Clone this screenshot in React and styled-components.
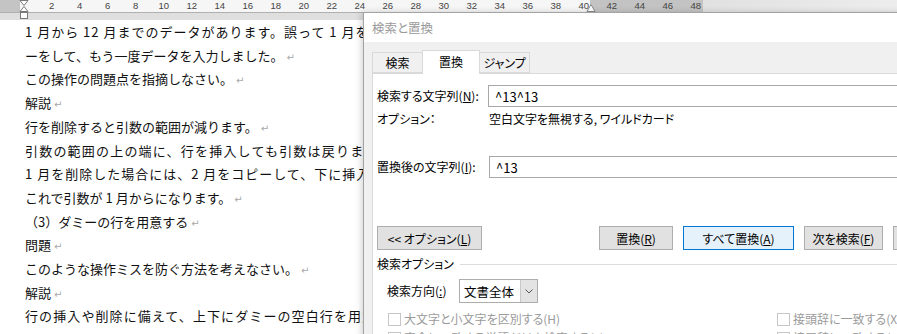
import React from "react";
import styled, { createGlobalStyle } from "styled-components";

const Global = createGlobalStyle`
  html, body { margin: 0; padding: 0; background: #fff; }
  body { width: 897px; height: 334px; overflow: hidden; }
`;

const Screen = styled.div`
  position: relative;
  width: 897px;
  height: 334px;
  overflow: hidden;
  background: #fff;
  font-family: "Noto Sans CJK JP", sans-serif;
`;

/* ---------- Ruler ---------- */
const Ruler = styled.div`
  position: relative;
  height: 20px;
  display: flex;
  flex-direction: column;
`;
const RulerTrack = styled.div`
  height: 12px;
  border-bottom: 1px solid #b0b0b0;
  background: linear-gradient(
    to right,
    #c4c4c4 0 20px,
    #f6f6f6 20px 590px,
    #c3c3c3 590px 703px,
    #e1e1e1 703px,
    #ededed 897px
  );
  display: flex;
  padding-left: 37.7px;
`;
const RulerNum = styled.span`
  flex: none;
  width: 28px;
  text-align: center;
  font: 9.5px/12px "Liberation Sans", Arial, sans-serif;
  color: #444;
`;
const RulerFoot = styled.div`
  height: 7px;
  background: #dfdfdf;
`;
const IndentMarker = styled.svg`
  position: absolute;
  left: 19px;
  top: 0;
`;
const RightMarker = styled.svg`
  position: absolute;
  left: 586px;
  top: 4px;
`;

/* ---------- Document ---------- */
const Doc = styled.div`
  width: 338px;
  overflow: hidden;
  padding-left: 25px;
  font-size: 13px;
  line-height: 23.7px;
  color: #111;
  white-space: nowrap;
`;
const Line = styled.div`
  overflow: hidden;
  letter-spacing: ${(p) => p.$spread || 0}px;
`;
const Mark = styled.span`
  color: #a8a8a8;
  font: 10px "DejaVu Sans", sans-serif;
  margin-left: 3px;
  letter-spacing: 0;
`;

/* ---------- Dialog ---------- */
const Dialog = styled.div`
  position: absolute;
  left: 363px;
  top: 12px;
  width: 620px;
  height: 360px;
  background: #f0f0f0;
  border: 1px solid #a3a3a3;
  box-shadow: -2px 0 6px rgba(0, 0, 0, 0.16);
  display: flex;
  flex-direction: column;
  font-family: "Noto Sans CJK JP", sans-serif;
  font-size: 12px;
  font-feature-settings: "palt";
  color: #000;
`;
const TitleBar = styled.div`
  height: 29px;
  flex: none;
  background: #fff;
  color: #9a9a9a;
  display: flex;
  align-items: center;
  padding-left: 8px;
  font-size: 12.5px;
`;
const Body = styled.div`
  flex: 1;
  display: flex;
  flex-direction: column;
  padding-left: 8px;
`;
const TabStrip = styled.div`
  height: 31px;
  flex: none;
  display: flex;
  align-items: flex-end;
`;
const Tab = styled.div`
  position: relative;
  z-index: ${(p) => (p.$active ? 2 : 0)};
  width: ${(p) => p.$w}px;
  height: ${(p) => (p.$active ? 24 : 21)}px;
  margin-bottom: ${(p) => (p.$active ? -1 : 0)}px;
  margin-left: ${(p) => (p.$first ? 0 : -1)}px;
  box-sizing: border-box;
  border: 1px solid #d9d9d9;
  border-bottom: ${(p) => (p.$active ? "none" : "1px solid #d9d9d9")};
  background: ${(p) => (p.$active ? "#fff" : "#f0f0f0")};
  display: flex;
  align-items: center;
  justify-content: center;
  padding-bottom: ${(p) => (p.$active ? 2 : 0)}px;
`;
const Panel = styled.div`
  position: relative;
  z-index: 1;
  flex: 1;
  background: #fff;
  border: 1px solid #d9d9d9;
  padding: 11px 0 0 4px;
  display: flex;
  flex-direction: column;
`;
const FieldRow = styled.div`
  display: flex;
  align-items: center;
  margin-top: ${(p) => p.$mt || 0}px;
`;
const FieldLabel = styled.div`
  width: ${(p) => p.$w}px;
  flex: none;
  line-height: 16px;
  white-space: nowrap;
`;
const TextBox = styled.div`
  flex: 1;
  height: 22px;
  box-sizing: border-box;
  border: 1px solid #a8a8a8;
  background: #fff;
  padding-left: 6px;
  display: flex;
  align-items: center;
  font-size: 13px;
`;
const ButtonRow = styled.div`
  display: flex;
  gap: 10px;
  margin-top: 48px;
`;
const Button = styled.div`
  flex: none;
  width: ${(p) => p.$w}px;
  height: 24px;
  box-sizing: border-box;
  margin-right: ${(p) => p.$mr || 0}px;
  border: 1px solid ${(p) => (p.$default ? "#0078d7" : "#adadad")};
  background: ${(p) => (p.$default ? "#e5f1fb" : "#e1e1e1")};
  display: flex;
  align-items: center;
  justify-content: center;
  white-space: nowrap;
  overflow: hidden;
`;
const GroupHeader = styled.div`
  display: flex;
  align-items: center;
  margin-top: 6px;
  line-height: 16px;
  &::after {
    content: "";
    flex: 1;
    height: 1px;
    background: #dcdcdc;
    margin-left: 6px;
  }
`;
const DirectionRow = styled.div`
  display: flex;
  align-items: center;
  margin-top: 7px;
  padding-left: 10px;
`;
const Select = styled.div`
  width: 79px;
  height: 24px;
  box-sizing: border-box;
  border: 1px solid #adadad;
  background: #fff;
  display: flex;
`;
const SelectValue = styled.div`
  flex: 1;
  display: flex;
  align-items: center;
  padding-left: 4px;
  font-size: 12.5px;
`;
const SelectButton = styled.div`
  width: 16px;
  background: #e3e3e3;
  border-left: 1px solid #c8c8c8;
  display: flex;
  align-items: center;
  justify-content: center;
`;
const CheckGrid = styled.div`
  display: grid;
  grid-template-columns: 389px auto;
  row-gap: 3px;
  margin-top: 8px;
  padding-left: 11px;
`;
const CheckItem = styled.div`
  display: flex;
  align-items: center;
  gap: 3px;
  color: #9b9b9b;
  line-height: 16px;
  white-space: nowrap;
`;
const Box = styled.span`
  width: 13px;
  height: 13px;
  box-sizing: border-box;
  border: 1px solid #c6c6c6;
  background: #fff;
  flex: none;
`;

const rulerNums = Array.from({ length: 24 }, (_, i) => (i + 1) * 2);

const docLines = [
  { t: "1 月から 12 月までのデータがあります。誤って 1 月を削除し", m: false, s: 1.0 },
  { t: "ーをして、もう一度データを入力しました。", m: true },
  { t: "この操作の問題点を指摘しなさい。", m: true },
  { t: "解説", m: true },
  { t: "行を削除すると引数の範囲が減ります。", m: true },
  { t: "引数の範囲の上の端に、行を挿入しても引数は戻りません。", m: false, s: 1.2 },
  { t: "1 月を削除した場合には、2 月をコピーして、下に挿入します。", m: false, s: 1.0 },
  { t: "これで引数が 1 月からになります。", m: true },
  { t: "（3）ダミーの行を用意する", m: true },
  { t: "問題", m: true },
  { t: "このような操作ミスを防ぐ方法を考えなさい。", m: true },
  { t: "解説", m: true },
  { t: "行の挿入や削除に備えて、上下にダミーの空白行を用意します。", m: false, s: 1.1 },
];

export default function App() {
  return (
    <Screen>
      <Global />
      <Ruler>
        <RulerTrack>
          {rulerNums.map((n) => (
            <RulerNum key={n}>{n}</RulerNum>
          ))}
        </RulerTrack>
        <RulerFoot />
        <IndentMarker width="10" height="20" viewBox="0 0 10 20">
          <path d="M1 0.5 L9 0.5 L5 5.5 Z" fill="#fff" stroke="#7a7a7a" />
          <path d="M5 6.5 L9 11.5 L1 11.5 Z" fill="#fff" stroke="#7a7a7a" />
          <rect x="1.5" y="12.5" width="7" height="6" fill="#fff" stroke="#7a7a7a" />
        </IndentMarker>
        <RightMarker width="10" height="9" viewBox="0 0 10 9">
          <path d="M5 0.5 L9 7.5 L1 7.5 Z" fill="#fff" stroke="#8a8a8a" />
        </RightMarker>
      </Ruler>

      <Doc>
        {docLines.map((l, i) => (
          <Line key={i} $spread={l.s}>
            {l.t}
            {l.m && <Mark>↵</Mark>}
          </Line>
        ))}
      </Doc>

      <Dialog>
        <TitleBar>検索と置換</TitleBar>
        <Body>
          <TabStrip>
            <Tab $first $w={51}>検索</Tab>
            <Tab $active $w={58}>置換</Tab>
            <Tab $w={51}>ジャンプ</Tab>
          </TabStrip>
          <Panel>
            <FieldRow>
              <FieldLabel $w={111}>
                検索する文字列(<u>N</u>):
              </FieldLabel>
              <TextBox>^13^13</TextBox>
            </FieldRow>
            <FieldRow $mt={3}>
              <FieldLabel $w={112}>オプション：</FieldLabel>
              <div>空白文字を無視する, ワイルドカード</div>
            </FieldRow>
            <FieldRow $mt={29}>
              <FieldLabel $w={112}>
                置換後の文字列(<u>I</u>):
              </FieldLabel>
              <TextBox>^13</TextBox>
            </FieldRow>
            <ButtonRow>
              <Button $w={105} $mr={107}>
                &lt;&lt; オプション(<u>L</u>)
              </Button>
              <Button $w={74}>
                置換(<u>R</u>)
              </Button>
              <Button $w={111} $default>
                すべて置換(<u>A</u>)
              </Button>
              <Button $w={79}>
                次を検索(<u>F</u>)
              </Button>
              <Button $w={80}>キャンセル</Button>
            </ButtonRow>
            <GroupHeader>検索オプション</GroupHeader>
            <DirectionRow>
              <FieldLabel $w={72}>
                検索方向(<u>:</u>)
              </FieldLabel>
              <Select>
                <SelectValue>文書全体</SelectValue>
                <SelectButton>
                  <svg width="8" height="5" viewBox="0 0 8 5">
                    <path d="M0.5 0.5 L4 4 L7.5 0.5" fill="none" stroke="#555" strokeWidth="1" />
                  </svg>
                </SelectButton>
              </Select>
            </DirectionRow>
            <CheckGrid>
              <CheckItem>
                <Box />
                大文字と小文字を区別する(H)
              </CheckItem>
              <CheckItem>
                <Box />
                接頭辞に一致する(X)
              </CheckItem>
              <CheckItem>
                <Box />
                完全に一致する単語だけを検索する(Y)
              </CheckItem>
              <CheckItem>
                <Box />
                接尾辞に一致する(T)
              </CheckItem>
            </CheckGrid>
          </Panel>
        </Body>
      </Dialog>
    </Screen>
  );
}
